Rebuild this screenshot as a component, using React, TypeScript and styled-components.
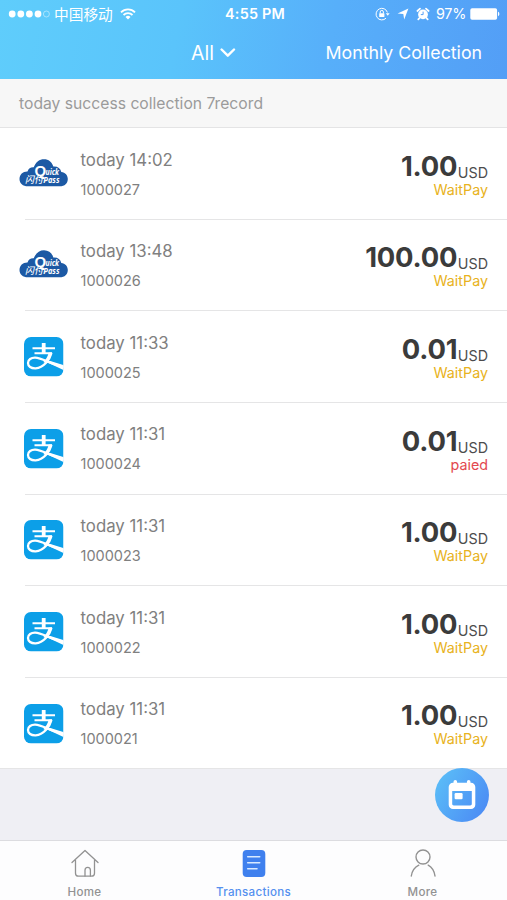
import React from "react";
import styled, { createGlobalStyle } from "styled-components";

const GlobalStyle = createGlobalStyle`
  * { box-sizing: border-box; }
  body { margin: 0; background: #efeff4; }
`;

const Screen = styled.div`
  position: relative;
  display: flex;
  flex-direction: column;
  width: 507px;
  height: 900px;
  overflow: hidden;
  background: #efeff4;
  font-family: Inter, "Noto Sans CJK SC", sans-serif;
  white-space: nowrap;
`;

const Header = styled.header`
  flex: none;
  height: 79px;
  color: #fff;
  background: linear-gradient(100deg, #5fcdfb 0%, #5ac4fb 35%, #57affa 65%, #539ef6 100%);
`;

const StatusBar = styled.div`
  display: grid;
  grid-template-columns: 1fr auto 1fr;
  align-items: center;
  height: 27px;
  padding: 0 7px 0 8px;
`;

const Carrier = styled.div`
  display: flex;
  align-items: center;
  font-size: 14.7px;
  line-height: 27px;
`;

const CarrierName = styled.span`
  margin: 0 7px 0 4px;
  font-family: "Noto Sans CJK SC", sans-serif;
  font-weight: 400;
`;

const Clock = styled.div`
  padding-left: 2px;
  font-size: 14.4px;
  font-weight: 600;
  letter-spacing: 0.2px;
`;

const Indicators = styled.div`
  display: flex;
  align-items: center;
  justify-content: flex-end;
`;

const Gap = styled.span`
  width: 7px;
`;

const BatteryLevel = styled.span`
  margin: 0 4px 0 6px;
  font-size: 14.4px;
  letter-spacing: -0.3px;
`;

const NavBar = styled.div`
  display: grid;
  grid-template-columns: 191px auto 1fr;
  align-items: center;
  height: 51px;
  padding-right: 25px;
`;

const Filter = styled.div`
  grid-column: 2;
  display: flex;
  align-items: center;
  gap: 6px;
  font-size: 19.5px;
`;

const NavLink = styled.div`
  text-align: right;
  font-size: 17.8px;
  letter-spacing: -0.03px;
`;

const Summary = styled.div`
  flex: none;
  height: 49px;
  padding-left: 19px;
  border-bottom: 1px solid #e4e4e5;
  background: #f7f7f7;
  color: #9b9b9b;
  font-size: 15.7px;
  line-height: 50px;
`;

const List = styled.main`
  flex: none;
  background: #fff;
`;

const Row = styled.article`
  display: grid;
  grid-template-columns: 80.5px 1fr auto;
  height: 91.65px;
  padding-right: 19px;
  background: linear-gradient(#e5e5e6, #e5e5e6) 25px 100% / 100% 1px no-repeat;
  &:last-child { background-position: 0 100%; }
`;

const Brand = styled.div`
  display: flex;
  align-items: center;
  padding-left: 19px;
  svg { display: block; }
`;

const Details = styled.div`
  padding-top: 16.5px;
  color: #808080;
`;

const Time = styled.div`
  font-size: 16.8px;
  line-height: 30px;
`;

const OrderId = styled.div`
  font-size: 14.5px;
  line-height: 29px;
`;

const Payment = styled.div`
  display: flex;
  flex-direction: column;
  align-items: flex-end;
  padding-top: 18.6px;
`;

const Amount = styled.div`
  display: flex;
  height: 33px;
  color: #3b3b3b;
`;

const Value = styled.span`
  margin-right: 0.6px;
  font-size: 27.4px;
  font-weight: 700;
  letter-spacing: -0.2px;
  line-height: 38px;
`;

const Currency = styled.span`
  font-size: 14.3px;
  line-height: 51px;
  color: #4c4c4c;
`;

const Status = styled.div<{ $paid: boolean }>`
  font-size: 14.3px;
  line-height: 19px;
  color: ${(p) => (p.$paid ? "#e3484f" : "#e8b220")};
`;

const CalendarButton = styled.button`
  position: absolute;
  left: 435px;
  top: 768px;
  display: grid;
  place-items: center;
  width: 54px;
  height: 54px;
  padding: 0;
  border: 0;
  border-radius: 50%;
  background: linear-gradient(120deg, #5cc2f8, #4a86f4);
`;

const TabBar = styled.nav`
  display: grid;
  grid-template-columns: repeat(3, 1fr);
  height: 60px;
  margin-top: auto;
  border-top: 1px solid #dcdce0;
  background: #fdfdfe;
`;

const Tab = styled.div<{ $active?: boolean }>`
  display: flex;
  flex-direction: column;
  align-items: center;
  padding-top: 6px;
  color: ${(p) => (p.$active ? "#5590ef" : "#929292")};
  svg { display: block; }
`;

const TabLabel = styled.span`
  margin-top: 5px;
  font-size: 11.6px;
  font-weight: 500;
  line-height: 16px;
  letter-spacing: 0.3px;
`;

const SignalDots = () => (
  <svg width="42" height="10" viewBox="0 0 42 10" fill="#fff">
    {[4.2, 12.8, 21.4, 30].map((x) => (
      <circle key={x} cx={x} cy="5" r="3.4" />
    ))}
    <circle cx="38.4" cy="5" r="3" fill="none" stroke="#fff" strokeWidth=".6" opacity=".75" />
  </svg>
);

const Wifi = () => (
  <svg width="16" height="12" viewBox="0 0 16 12" fill="none" stroke="#fff" strokeWidth="1.8">
    <path d="M1 4.3a10 10 0 0 1 14 0M3.5 7a6.4 6.4 0 0 1 9 0" />
    <path d="M8 11.5 5.5 9a3.6 3.6 0 0 1 5 0Z" fill="#fff" stroke="none" />
  </svg>
);

const RotationLock = () => (
  <svg width="15" height="14" viewBox="0 0 15 14" fill="none" stroke="#fff">
    <path d="M12.4 5.4A5.8 5.8 0 1 0 11 11.2" strokeWidth="1" />
    <path d="m10.8 6.3 2 2.4 1.8-2.4Z" fill="#fff" stroke="none" />
    <path d="M5.2 6.4V5a1.6 1.6 0 0 1 3.2 0v1.4" />
    <rect x="4.2" y="6.2" width="5.2" height="3.9" rx=".5" fill="#fff" stroke="none" />
  </svg>
);

const LocationArrow = () => (
  <svg width="12" height="12" viewBox="0 0 12 12" fill="#fff">
    <path d="M11.4.6 7.2 11.4 6.3 6 .6 5.4Z" />
  </svg>
);

const Alarm = () => (
  <svg width="14" height="14" viewBox="0 0 14 14">
    <circle cx="7" cy="7.4" r="4.9" fill="#fff" />
    <path d="M1.4 4 4 1.7M12.6 4 10 1.7M3.5 11 2.3 12.4M10.5 11l1.2 1.4" stroke="#fff" strokeWidth="1.8" strokeLinecap="round" />
    <path d="M7.1 4.6v3H4.8" fill="none" stroke="#579ff5" strokeWidth="1" />
  </svg>
);

const Battery = () => (
  <svg width="30" height="12" viewBox="0 0 30 12" fill="#fff">
    <rect x=".3" y=".3" width="26.8" height="11.4" rx="1.8" />
    <path d="M28 3.8c1.8.6 1.8 3.8 0 4.4Z" />
  </svg>
);

const Chevron = () => (
  <svg width="16" height="10" viewBox="0 0 16 10" fill="none" stroke="#fff" strokeWidth="2.4" strokeLinecap="round" strokeLinejoin="round">
    <path d="m1.6 1.5 6.2 6.2L14 1.5" />
  </svg>
);

const QuickPass = () => (
  <svg width="50" height="30" viewBox="0 0 50 30" fontFamily="Open Sans, Noto Sans CJK SC, sans-serif" fill="#fff" fontStyle="italic" fontWeight="700">
    <path fill="#1c59a4" d="M9 27.300C3.800 27.300.5 24.500.5 20c0-4.500 3.400-7.600 8-7.500 1.200-3 3-4.400 6.200-4.200C17 2.800 20.400.2 25 .2s8 2.700 9.300 7.300c4.400-.3 7 1.600 8 5.400 4 .4 6.500 3.300 6.500 7.100 0 4.500-3.100 7.300-8 7.300Z" />
    <text x="15.500" y="17" fontSize="15" fontStyle="normal" fontFamily="Liberation Sans, sans-serif">Q</text>
    <text x="26.500" y="16.400" fontSize="8" textLength="13.500" lengthAdjust="spacingAndGlyphs">uick</text>
    <text x="6" y="24.300" fontSize="9.500" fontWeight="500" textLength="18" lengthAdjust="spacingAndGlyphs">闪付</text>
    <text x="24.300" y="23.900" fontSize="8" textLength="16.200" lengthAdjust="spacingAndGlyphs">Pass</text>
  </svg>
);

const Alipay = () => (
  <svg width="50" height="40" viewBox="0 0 50 40" fill="none" stroke="#fff">
    <clipPath id="alipay-tile">
      <rect x="5" y="0" width="39.500" height="39.500" rx="7" />
    </clipPath>
    <g clipPath="url(#alipay-tile)">
      <rect x="5" y="0" width="39.500" height="39.500" fill="#0c9fe8" stroke="none" />
      <path d="M24.700 6v10" strokeWidth="3.800" />
      <path d="M13.500 11.200h22.500M15.500 16.300h17.500" strokeWidth="2" />
      <path d="M32.500 16C30.700 22.800 24.600 31 16.700 31.300c-4.800.2-7.700-2-7.700-5.300 0-3.400 3.200-5.500 7.200-5.400C23 20.800 32 27.200 45 30" strokeWidth="2.300" />
      <path d="M30.500 23.800 45 28.300v4.900L29 25.700Z" fill="#fff" stroke="none" />
      <path d="M33.200 15.500c-1.200 4.400-3.200 7.800-6.300 10.800l-2.600-1.200c2.800-2.800 4.600-5.800 5.400-9.600Z" fill="#fff" stroke="none" />
    </g>
  </svg>
);

const CalendarIcon = () => (
  <svg width="28" height="30" viewBox="0 0 28 30">
    <path fill="#fff" fillRule="evenodd" d="M5.500 1.800a1.800 1.800 0 0 1 3.600 0v1h9.800v-1a1.800 1.800 0 0 1 3.600 0v1H23a4.300 4.300 0 0 1 4.300 4.300v17.600a4.300 4.300 0 0 1-4.300 4.300H5a4.300 4.300 0 0 1-4.300-4.300V7.100A4.300 4.300 0 0 1 5 2.800h.5ZM4.200 11v12.800c0 1 .6 1.600 1.600 1.600h16.400c1 0 1.600-.6 1.600-1.600V11Z" />
    <rect x="6.600" y="13" width="8" height="6.200" rx="1.200" fill="#fff" />
  </svg>
);

const HomeIcon = () => (
  <svg width="30" height="32" viewBox="0 0 30 32" fill="none" stroke="#929292" strokeWidth="1.300" strokeLinecap="round" strokeLinejoin="round">
    <path d="M2 15.500 15 3.500l13 12M5.500 13.500v12.700c0 2 1 3 3 3h13c2 0 3-1 3-3V13.500" />
    <path d="M15 29v-5.800c0-3.900 5.400-3.900 5.400 0V29" />
  </svg>
);

const TransactionsIcon = () => (
  <svg width="30" height="32" viewBox="0 0 30 32">
    <rect x="3.700" y="3" width="22.600" height="27" rx="4" fill="#3f80ee" />
    <path d="M8.700 9.700h12M8.700 15.700h12M8.700 21.700h9.300" stroke="#d8e9ff" strokeWidth="1.600" strokeLinecap="round" />
  </svg>
);

const PersonIcon = () => (
  <svg width="30" height="32" viewBox="0 0 30 32" fill="none" stroke="#929292" strokeWidth="1.400" strokeLinecap="round">
    <circle cx="15" cy="10" r="7" />
    <path d="M10.800 18.200c-4 2-6.800 6-7.500 10.800M20.200 18.200c3.600 2 6.100 6 6.800 10.800" />
  </svg>
);

type Transaction = { time: string; id: string; value: string; brand: "quickpass" | "alipay"; paid?: boolean };

const transactions: Transaction[] = [
  { time: "14:02", id: "1000027", value: "1.00", brand: "quickpass" },
  { time: "13:48", id: "1000026", value: "100.00", brand: "quickpass" },
  { time: "11:33", id: "1000025", value: "0.01", brand: "alipay" },
  { time: "11:31", id: "1000024", value: "0.01", brand: "alipay", paid: true },
  { time: "11:31", id: "1000023", value: "1.00", brand: "alipay" },
  { time: "11:31", id: "1000022", value: "1.00", brand: "alipay" },
  { time: "11:31", id: "1000021", value: "1.00", brand: "alipay" },
];

export default function App() {
  return (
    <Screen>
      <GlobalStyle />
      <Header>
        <StatusBar>
          <Carrier>
            <SignalDots />
            <CarrierName>中国移动</CarrierName>
            <Wifi />
          </Carrier>
          <Clock>4:55 PM</Clock>
          <Indicators>
            <RotationLock />
            <Gap />
            <LocationArrow />
            <Gap />
            <Alarm />
            <BatteryLevel>97%</BatteryLevel>
            <Battery />
          </Indicators>
        </StatusBar>
        <NavBar>
          <Filter>
            All <Chevron />
          </Filter>
          <NavLink>Monthly Collection</NavLink>
        </NavBar>
      </Header>
      <Summary>today success collection 7record</Summary>
      <List>
        {transactions.map((t) => (
          <Row key={t.id}>
            <Brand>{t.brand === "alipay" ? <Alipay /> : <QuickPass />}</Brand>
            <Details>
              <Time>today {t.time}</Time>
              <OrderId>{t.id}</OrderId>
            </Details>
            <Payment>
              <Amount>
                <Value>{t.value}</Value>
                <Currency>USD</Currency>
              </Amount>
              <Status $paid={!!t.paid}>{t.paid ? "paied" : "WaitPay"}</Status>
            </Payment>
          </Row>
        ))}
      </List>
      <TabBar>
        <Tab>
          <HomeIcon />
          <TabLabel>Home</TabLabel>
        </Tab>
        <Tab $active>
          <TransactionsIcon />
          <TabLabel>Transactions</TabLabel>
        </Tab>
        <Tab>
          <PersonIcon />
          <TabLabel>More</TabLabel>
        </Tab>
      </TabBar>
      <CalendarButton aria-label="Calendar">
        <CalendarIcon />
      </CalendarButton>
    </Screen>
  );
}
